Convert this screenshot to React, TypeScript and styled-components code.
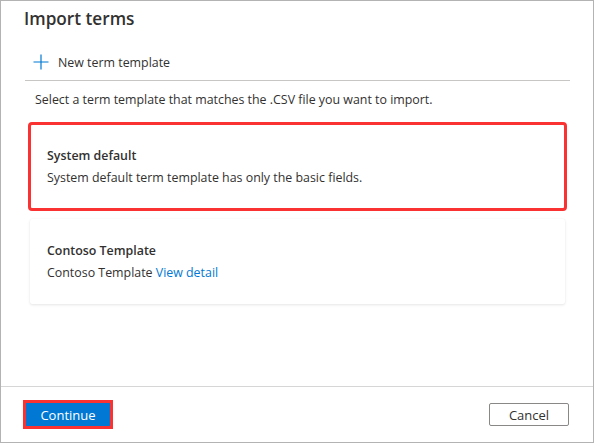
import React from "react";
import styled, { createGlobalStyle } from "styled-components";

const Global = createGlobalStyle`
  html, body { margin: 0; padding: 0; background: #ffffff; }
  body { font-family: "Open Sans", "Noto Sans", Arial, sans-serif; color: #323130; }
  * { box-sizing: border-box; }
`;

const Dialog = styled.div`
  width: 594px;
  height: 443px;
  border: 1px solid #b3b3b3;
  background: #ffffff;
  display: flex;
  flex-direction: column;
`;

const Title = styled.h1`
  margin: 0;
  padding: 4px 23px 0;
  height: 32px;
  font-size: 17.2px;
  line-height: 28px;
  font-weight: 600;
  color: #323130;
`;

const Body = styled.div`
  flex: 1;
  padding: 0 23px 0 24px;
  display: flex;
  flex-direction: column;
`;

const CommandBar = styled.div`
  margin-top: 11px;
  height: 37px;
  border-bottom: 1px solid #c8c6c4;
  display: flex;
  align-items: center;
  padding-left: 8px;
`;

const CommandButton = styled.button`
  display: flex;
  align-items: center;
  gap: 9px;
  border: none;
  background: none;
  padding: 0;
  font-family: inherit;
  font-size: 12.4px;
  color: #323130;
  cursor: pointer;
`;

const Instruction = styled.p`
  margin: 9px 0 0;
  padding-left: 10px;
  font-size: 12.4px;
  line-height: 20px;
`;

const CardList = styled.div`
  margin-top: 14px;
  display: flex;
  flex-direction: column;
  gap: 10px;
  padding: 0 5px;
`;

const Card = styled.div<{ $selected?: boolean }>`
  height: 85px;
  padding: 22px 17px 0;
  background: #ffffff;
  border-radius: 2px;
  box-shadow: ${(p) =>
    p.$selected ? "none" : "0 1px 3px rgba(0,0,0,0.10), 0 0 1px rgba(0,0,0,0.06)"};
  outline: ${(p) => (p.$selected ? "3px solid #fa3232" : "none")};
  outline-offset: -1px;
`;

const CardTitle = styled.div`
  font-size: 12.4px;
  line-height: 20px;
  font-weight: 600;
  margin-bottom: 2px;
`;

const CardText = styled.div`
  font-size: 12.4px;
  line-height: 20px;
`;

const Link = styled.a`
  color: #0078d4;
  text-decoration: none;
  cursor: pointer;
`;

const Footer = styled.div`
  height: 56px;
  border-top: 1px solid #d6d6d6;
  display: flex;
  align-items: center;
  justify-content: space-between;
  padding: 0 24px 0 25px;
`;

const PrimaryButton = styled.button`
  width: 84px;
  height: 23px;
  background: #0078d4;
  color: #ffffff;
  border: none;
  border-radius: 0;
  font-family: inherit;
  font-size: 13px;
  outline: 3px solid #fa3232;
  padding: 0;
  cursor: pointer;
`;

const SecondaryButton = styled.button`
  width: 80px;
  height: 23px;
  background: #ffffff;
  color: #323130;
  border: 1px solid #8a8886;
  border-radius: 2px;
  font-family: inherit;
  font-size: 13px;
  padding: 0;
  cursor: pointer;
`;

const PlusIcon = () => (
  <svg width="16" height="16" viewBox="0 0 16 16" aria-hidden="true">
    <path d="M8 0.5V15.5M0.5 8H15.5" stroke="#0078d4" strokeWidth="1.2" fill="none" />
  </svg>
);

export default function App() {
  return (
    <>
      <Global />
      <Dialog>
        <Title>Import terms</Title>
        <Body>
          <CommandBar>
            <CommandButton>
              <PlusIcon />
              New term template
            </CommandButton>
          </CommandBar>
          <Instruction>
            Select a term template that matches the .CSV file you want to import.
          </Instruction>
          <CardList>
            <Card $selected>
              <CardTitle>System default</CardTitle>
              <CardText>System default term template has only the basic fields.</CardText>
            </Card>
            <Card>
              <CardTitle>Contoso Template</CardTitle>
              <CardText>
                Contoso Template <Link>View detail</Link>
              </CardText>
            </Card>
          </CardList>
        </Body>
        <Footer>
          <PrimaryButton>Continue</PrimaryButton>
          <SecondaryButton>Cancel</SecondaryButton>
        </Footer>
      </Dialog>
    </>
  );
}
